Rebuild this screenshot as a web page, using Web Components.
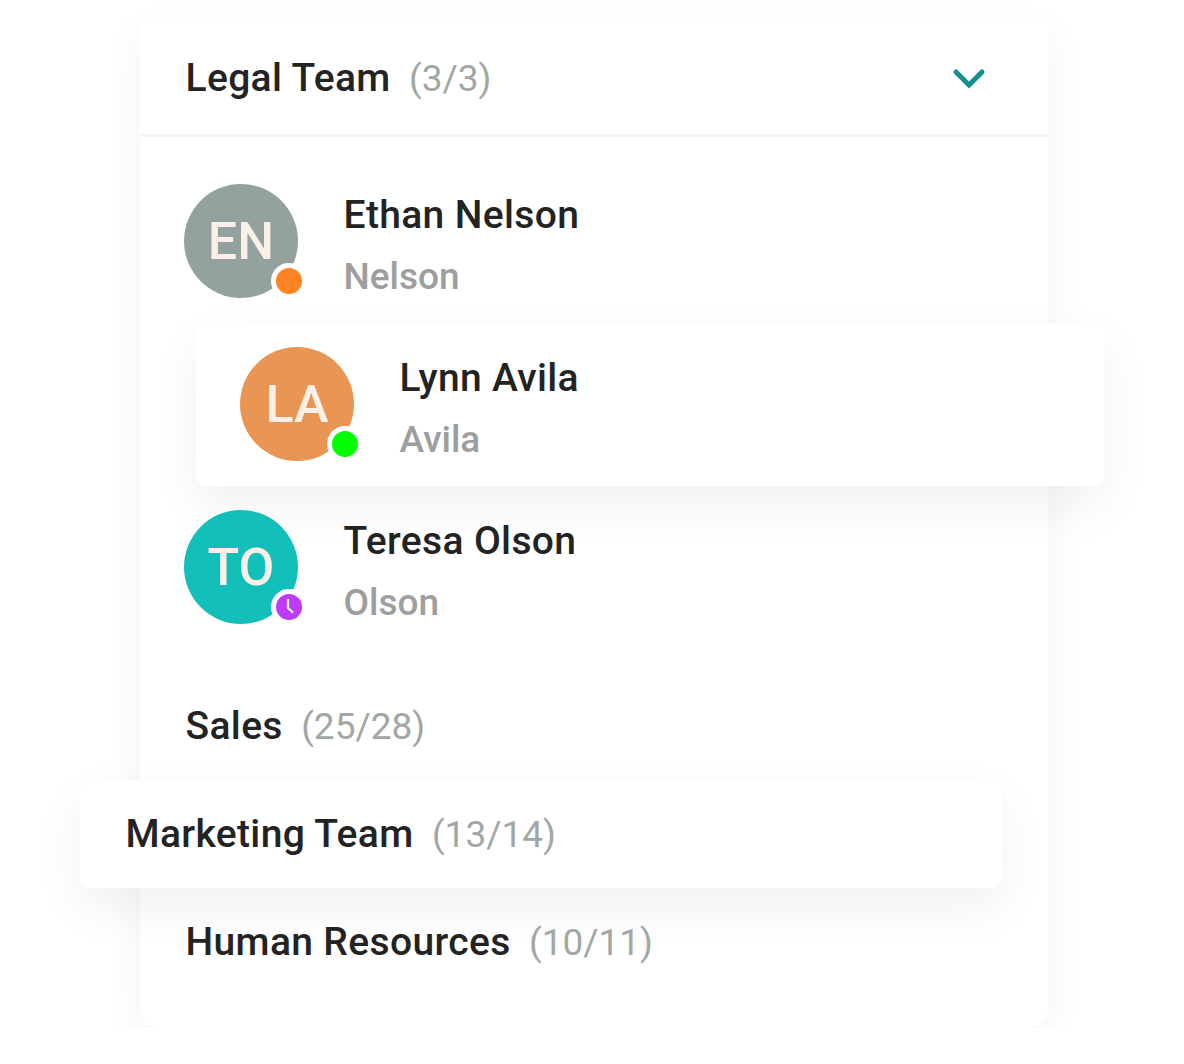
<!doctype html>
<html>
<head>
    <meta charset="utf-8">
    <title>Team list</title>
    <style>
        html, body {
            margin: 0;
            background: #fff;
            font-family: Roboto, "Liberation Sans", sans-serif;
        }
    </style>
    <script>
        class TeamCard extends HTMLElement {
            constructor() {
                super();
                this.attachShadow({mode: 'open'}).innerHTML = `
                <style>
                    :host {
                        display: block;
                        box-sizing: border-box;
                        width: 908px;
                        height: 1006px;
                        margin: 22px 0 0 140px;
                        background: #fff;
                        border-radius: 4px 4px 20px 20px;
                        box-shadow: 0 10px 40px rgba(0, 0, 0, .05);
                    }
                </style>
                <slot></slot>
                `;
            }
        }

        class TeamHeader extends HTMLElement {
            constructor() {
                super();
                this.attachShadow({mode: 'open'}).innerHTML = `
                <style>
                    :host {
                        display: flex;
                        align-items: center;
                        justify-content: space-between;
                        box-sizing: border-box;
                        height: 115px;
                        padding: 0 62px 0 45.5px;
                        border-bottom: 3px solid #f8f4f1;
                    }
                    svg { display: block; margin-top: 2px; }
                </style>
                <slot></slot>
                <svg width="34" height="22" viewBox="0 0 34 22">
                    <path d="M4 4 L17 17 L30 4" fill="none" stroke="#16908f" stroke-width="5" stroke-linecap="round"/>
                </svg>
                `;
            }
        }

        class GroupLabel extends HTMLElement {
            constructor() {
                super();
                this.attachShadow({mode: 'open'});
            }

            connectedCallback() {
                this.shadowRoot.innerHTML = `
                <style>
                    :host {
                        display: flex;
                        align-items: baseline;
                        gap: 18.4px;
                        color: #232323;
                        font-size: 39px;
                        font-weight: 500;
                        letter-spacing: .35px;
                        white-space: nowrap;
                    }
                    .count {
                        color: #9fa8a5;
                        font-size: 37px;
                        font-weight: 400;
                        letter-spacing: 0;
                    }
                </style>
                <slot></slot>
                <span class="count">${this.getAttribute('count')}</span>
                `;
            }
        }

        class GroupRow extends HTMLElement {
            constructor() {
                super();
                this.attachShadow({mode: 'open'}).innerHTML = `
                <style>
                    :host {
                        display: flex;
                        align-items: center;
                        box-sizing: border-box;
                        height: 108px;
                        padding-left: 45.5px;
                        border-radius: 10px;
                        position: relative;
                    }
                    :host([raised]) {
                        margin: 0 46px 0 -60px;
                        background: #fff;
                        box-shadow: 0 20px 50px rgba(0, 0, 0, .06);
                    }
                </style>
                <slot></slot>
                `;
            }
        }

        class PersonRow extends HTMLElement {
            constructor() {
                super();
                this.attachShadow({mode: 'open'});
            }

            connectedCallback() {
                const color = this.getAttribute('color');
                const status = this.getAttribute('status');
                const clock = status === 'away' ? `
                    <svg width="26" height="26" viewBox="0 0 26 26">
                        <path d="M12 5 V14 L17 18.5" fill="none" stroke="#fff" stroke-width="2.2"/>
                    </svg>` : '';
                this.shadowRoot.innerHTML = `
                <style>
                    :host {
                        display: flex;
                        box-sizing: border-box;
                        height: 163px;
                        padding: 24px 44px;
                        border-radius: 10px;
                        position: relative;
                    }
                    :host([raised]) {
                        margin: 0 -56px 0 56px;
                        background: #fff;
                        box-shadow: 0 20px 50px rgba(0, 0, 0, .06);
                    }
                    .avatar {
                        position: relative;
                        flex: none;
                        display: flex;
                        align-items: center;
                        justify-content: center;
                        box-sizing: border-box;
                        width: 114px;
                        height: 114px;
                        padding-top: 1px;
                        border-radius: 50%;
                        background: ${color};
                        color: #fbf0e8;
                        font-size: 52px;
                        font-weight: 500;
                    }
                    .badge {
                        position: absolute;
                        left: 87px;
                        top: 79px;
                        width: 26px;
                        height: 26px;
                        border: 5px solid #fff;
                        border-radius: 50%;
                    }
                    .badge svg { display: block; }
                    .busy { background: #ff8320; }
                    .online { background: #00ff00; }
                    .away { background: #bd3bff; }
                    .text {
                        margin-left: 45.5px;
                        display: flex;
                        flex-direction: column;
                    }
                    .name {
                        color: #232323;
                        font-size: 39px;
                        font-weight: 500;
                        letter-spacing: .35px;
                        line-height: 62px;
                    }
                    .sub {
                        color: #9e9e9e;
                        font-size: 37px;
                        font-weight: 500;
                        line-height: 62px;
                    }
                </style>
                <div class="avatar">
                    <slot name="initials"></slot>
                    <div class="badge ${status}">${clock}</div>
                </div>
                <div class="text">
                    <div class="name"><slot name="name"></slot></div>
                    <div class="sub"><slot name="sub"></slot></div>
                </div>
                `;
            }
        }

        customElements.define('team-card', TeamCard);
        customElements.define('team-header', TeamHeader);
        customElements.define('group-label', GroupLabel);
        customElements.define('group-row', GroupRow);
        customElements.define('person-row', PersonRow);
    </script>
</head>
<body>
    <team-card>
        <team-header><group-label count="(3/3)">Legal Team</group-label></team-header>
        <div style="height:23px"></div>
        <person-row color="#93a19f" status="busy">
            <span slot="initials">EN</span><span slot="name">Ethan Nelson</span><span slot="sub">Nelson</span>
        </person-row>
        <person-row color="#e99655" status="online" raised>
            <span slot="initials">LA</span><span slot="name">Lynn Avila</span><span slot="sub">Avila</span>
        </person-row>
        <person-row color="#12bfb9" status="away">
            <span slot="initials">TO</span><span slot="name">Teresa Olson</span><span slot="sub">Olson</span>
        </person-row>
        <div style="height:23px"></div>
        <group-row><group-label count="(25/28)">Sales</group-label></group-row>
        <group-row raised><group-label count="(13/14)">Marketing Team</group-label></group-row>
        <group-row><group-label count="(10/11)">Human Resources</group-label></group-row>
    </team-card>
</body>
</html>
